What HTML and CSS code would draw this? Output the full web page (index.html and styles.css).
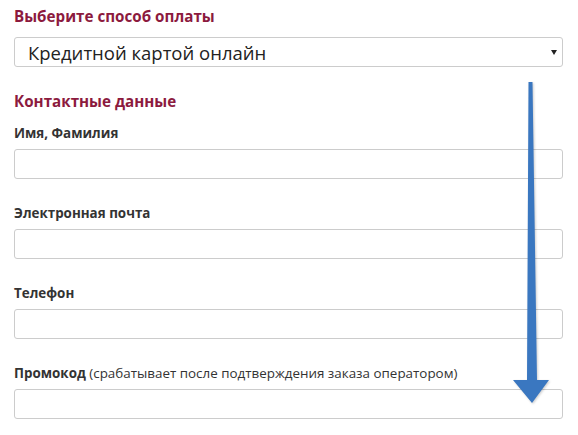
FILE: index.html
```html
<!DOCTYPE html>
<html>
<head>
<meta charset="utf-8"/>
<title>Оформление заказа</title>
<link rel="stylesheet" href="styles.css">
</head>
<body>
<div class="order">
  <h2 class="title">Выберите способ оплаты</h2>
  <div class="select-wrap">
    <select class="select">
      <option>Кредитной картой онлайн</option>
    </select>
  </div>

  <h2 class="title title-contacts">Контактные данные</h2>

  <div class="field">
    <label class="label">Имя, Фамилия</label>
    <input class="input" type="text">
  </div>
  <div class="field">
    <label class="label">Электронная почта</label>
    <input class="input" type="text">
  </div>
  <div class="field">
    <label class="label">Телефон</label>
    <input class="input" type="text">
  </div>
  <div class="field">
    <label class="label">Промокод <span class="hint">(срабатывает после подтверждения заказа оператором)</span></label>
    <input class="input" type="text">
  </div>

  <svg class="arrow" width="44" height="330" viewBox="0 0 44 330">
    <path d="M18.5 4 L22.5 4 L27 302 L39 302 L22 325 L3 302 L17 302 Z" fill="#3a77c0"/>
  </svg>
</div>
</body>
</html>
```

FILE: styles.css
```css
body {
  margin: 0;
  background-color: white;
  font-family: "Open Sans", "DejaVu Sans", sans-serif;
  color: #333;
}

.order {
  position: relative;
  width: 549px;
  padding: 6px 0 0 14px;
}

.title {
  margin: 0;
  font-size: 15.2px;
  line-height: 20px;
  font-weight: bold;
  color: #8c1a3e;
}

.title-contacts {
  margin-top: 24px;
  margin-bottom: 13px;
}

.select-wrap {
  position: relative;
  margin-top: 11px;
}

.select-wrap::after {
  content: "";
  position: absolute;
  right: 6px;
  top: 13px;
  border-left: 3px solid transparent;
  border-right: 3px solid transparent;
  border-top: 5px solid #222;
}

.select {
  display: block;
  width: 100%;
  height: 30px;
  margin: 0;
  padding: 0 0 0 13px;
  -webkit-appearance: none;
  appearance: none;
  border: 1px solid #ccc;
  border-radius: 3px;
  background: white;
  font-family: inherit;
  font-size: 18.5px;
  color: #222;
}

.field {
  margin-bottom: 25px;
}

.label {
  display: block;
  margin-bottom: 7px;
  font-size: 13.4px;
  line-height: 18px;
  font-weight: bold;
  color: #333;
}

.hint {
  font-weight: normal;
}

.input {
  display: block;
  box-sizing: border-box;
  width: 100%;
  height: 30px;
  margin: 0;
  border: 1px solid #ccc;
  border-radius: 3px;
  background: white;
}

.arrow {
  position: absolute;
  left: 510px;
  top: 78px;
  filter: drop-shadow(1px 1px 1px rgba(0, 0, 0, 0.2));
}
```
